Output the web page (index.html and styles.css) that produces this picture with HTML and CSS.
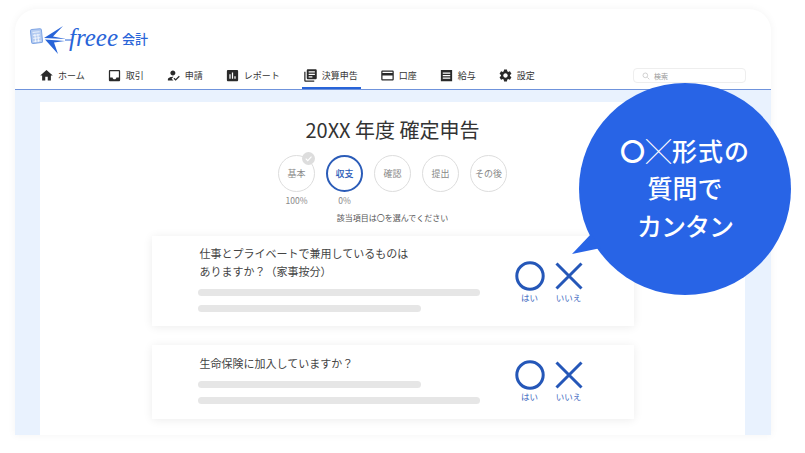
FILE: index.html
```html
<!DOCTYPE html>
<html lang="ja">
<head>
    <meta charset="UTF-8">
    <title>freee会計</title>
    <link rel="stylesheet" href="styles.css">
</head>
<body>
    <div class="window">
        <div class="logo">
            <svg class="logo-mark" viewBox="0 0 44 31" width="44" height="31">
                <g transform="rotate(-6 8 12)">
                    <rect x="2" y="5" width="11" height="14" rx="1.500" fill="#b4cbf1" stroke="#7fa5e4"/>
                    <path d="M4 8h7M4 11h7M4 14h7M4 17h7M6 10v8M9 10v8" stroke="#fff" stroke-width=".7"/>
                </g>
                <path d="M34 2L15 14l22 1-13-2.500z" fill="#2864d8"/>
                <path d="M29 30L16 15.500l20 1.500-11 1.500z" fill="#2864d8"/>
                <path d="M36 16h8" stroke="#2864d8" stroke-width="1"/>
            </svg>
            <span class="logo-name">freee</span>
            <span class="logo-sub">会計</span>
        </div>
        <div class="nav">
            <div class="nav-item">
                <svg class="icon" viewBox="0 0 24 24"><path d="M10 20v-6h4v6h5v-8h3L12 3 2 12h3v8z"/></svg>ホーム
            </div>
            <div class="nav-item">
                <svg class="icon" viewBox="0 0 24 24"><path d="M19 3H5c-1.1 0-2 .9-2 2v14c0 1.1.9 2 2 2h14c1.1 0 2-.9 2-2V5c0-1.100-.9-2-2-2zm0 12h-4c0 1.660-1.350 3-3 3s-3-1.340-3-3H5V5h14v10z"/></svg>取引
            </div>
            <div class="nav-item">
                <svg class="icon" viewBox="0 0 24 24"><path d="M9 17l3-2.940c-.39-.04-.68-.06-1-.06-2.670 0-8 1.340-8 4v2h9l-3-3zm2-5c2.210 0 4-1.790 4-4s-1.790-4-4-4-4 1.790-4 4 1.790 4 4 4M15.470 20.500L12 17l1.400-1.410 2.070 2.080 5.130-5.170 1.400 1.410z"/></svg>申請
            </div>
            <div class="nav-item">
                <svg class="icon" viewBox="0 0 24 24"><path d="M19 3H5c-1.100 0-2 .9-2 2v14c0 1.100.9 2 2 2h14c1.100 0 2-.9 2-2V5c0-1.100-.9-2-2-2zM9 17H7v-7h2v7zm4 0h-2V7h2v10zm4 0h-2v-4h2v4z"/></svg>レポート
            </div>
            <div class="nav-item active">
                <svg class="icon" viewBox="0 0 24 24"><path d="M4 6H2v14c0 1.100.9 2 2 2h14v-2H4V6zm16-4H8c-1.100 0-2 .9-2 2v12c0 1.100.9 2 2 2h12c1.100 0 2-.9 2-2V4c0-1.100-.9-2-2-2zm-1 9H9V9h10v2zm-4 4H9v-2h6v2zm4-8H9V5h10v2z"/></svg>決算申告
            </div>
            <div class="nav-item">
                <svg class="icon" viewBox="0 0 24 24"><path d="M20 4H4c-1.110 0-1.990.89-1.990 2L2 18c0 1.110.89 2 2 2h16c1.110 0 2-.89 2-2V6c0-1.110-.89-2-2-2zm0 14H4v-6h16v6zm0-10H4V6h16v2z"/></svg>口座
            </div>
            <div class="nav-item">
                <svg class="icon" viewBox="0 0 24 24"><path fill-rule="evenodd" d="M3 3h18v18H3zM6 7v2h12V7zM6 11v2h12v-2zM6 15v2h12v-2z"/></svg>給与
            </div>
            <div class="nav-item">
                <svg class="icon" viewBox="0 0 24 24"><path d="M19.140 12.940c.04-.3.06-.61.06-.94 0-.32-.02-.64-.07-.94l2.030-1.580c.18-.14.23-.41.12-.61l-1.920-3.320c-.12-.22-.37-.29-.59-.22l-2.390.96c-.5-.38-1.030-.7-1.620-.94l-.36-2.540c-.04-.24-.24-.41-.48-.41h-3.840c-.24 0-.43.17-.47.41l-.36 2.540c-.59.24-1.130.57-1.620.94l-2.390-.96c-.22-.08-.47 0-.59.22L2.740 8.870c-.12.21-.08.47.12.61l2.030 1.580c-.05.3-.09.63-.09.94s.02.64.07.94l-2.030 1.580c-.18.14-.23.41-.12.61l1.920 3.320c.12.22.37.29.59.22l2.390-.96c.5.38 1.030.7 1.620.94l.36 2.540c.05.24.24.41.48.41h3.840c.24 0 .44-.17.47-.41l.36-2.540c.59-.24 1.130-.56 1.620-.94l2.390.96c.22.08.47 0 .59-.22l1.920-3.320c.12-.22.07-.47-.12-.61l-2.010-1.580zM12 15.600c-1.980 0-3.600-1.620-3.600-3.600s1.620-3.600 3.600-3.600 3.600 1.620 3.600 3.600-1.620 3.600-3.600 3.600z"/></svg>設定
            </div>
            <div class="search">
                <svg class="search-icon" viewBox="0 0 12 12"><circle cx="5" cy="5" r="3.500"/><path d="M8 8l3 3"/></svg>検索
            </div>
        </div>
        <div class="content">
            <div class="panel">
                <h1 class="title">20XX 年度 確定申告</h1>
                <div class="steps">
                    <div class="step">
                        <div class="circle">基本
                            <svg class="done" viewBox="0 0 14 14"><circle cx="7" cy="7" r="7"/><path d="M4 7.200l2.200 2.200L10.200 5"/></svg>
                        </div>
                        <div class="percent">100%</div>
                    </div>
                    <div class="step">
                        <div class="circle current">収支</div>
                        <div class="percent">0%</div>
                    </div>
                    <div class="step"><div class="circle">確認</div></div>
                    <div class="step"><div class="circle">提出</div></div>
                    <div class="step"><div class="circle">その後</div></div>
                </div>
                <p class="hint">該当項目は〇を選んでください</p>

                <div class="card first">
                    <div class="question">
                        <p class="text">仕事とプライベートで兼用しているものは<br>ありますか？（家事按分）</p>
                        <div class="bar"></div>
                        <div class="bar short"></div>
                    </div>
                    <div class="answers">
                        <div class="answer">
                            <svg class="mark" viewBox="0 0 30 30"><circle cx="15" cy="15" r="13.200"/></svg>
                            <span>はい</span>
                        </div>
                        <div class="answer">
                            <svg class="mark" viewBox="0 0 30 30"><path d="M2.500 2.500l25 25M27.500 2.500l-25 25"/></svg>
                            <span>いいえ</span>
                        </div>
                    </div>
                </div>

                <div class="card second">
                    <div class="question">
                        <p class="text">生命保険に加入していますか？</p>
                        <div class="bar short"></div>
                        <div class="bar"></div>
                    </div>
                    <div class="answers">
                        <div class="answer">
                            <svg class="mark" viewBox="0 0 30 30"><circle cx="15" cy="15" r="13.200"/></svg>
                            <span>はい</span>
                        </div>
                        <div class="answer">
                            <svg class="mark" viewBox="0 0 30 30"><path d="M2.500 2.500l25 25M27.500 2.500l-25 25"/></svg>
                            <span>いいえ</span>
                        </div>
                    </div>
                </div>
            </div>
        </div>
    </div>

    <div class="bubble">
        <svg class="tail" viewBox="0 0 30 24" width="30" height="24"><path d="M0 20L19 0l10 14z"/></svg>
        <p class="bubble-text"><span class="wide"><b class="cross">〇╳</b>形式の</span><br>質問で<br><span class="tight">カンタン</span></p>
    </div>
</body>
</html>
```

FILE: styles.css
```css
* {
    margin: 0;
    padding: 0;
    box-sizing: border-box;
}
body {
    width: 805px;
    height: 453px;
    overflow: hidden;
    background: #fff;
    font-family: "Noto Sans CJK JP", "Noto Sans", sans-serif;
    color: #333;
    position: relative;
}
.window {
    width: 756px;
    height: 426px;
    margin: 9px 0 0 15px;
    display: flex;
    flex-direction: column;
    background: #fff;
    border-radius: 22px 22px 0 0;
    box-shadow: 0 0 8px rgba(0, 0, 0, .05);
}
.logo {
    height: 59px;
    padding: 15px 0 0 14px;
    display: flex;
    align-items: flex-start;
    flex-shrink: 0;
}
.logo-mark {
    flex-shrink: 0;
}
.logo-name {
    font-family: "Liberation Serif", serif;
    font-style: italic;
    font-size: 25px;
    line-height: 28px;
    color: #2864d8;
    margin-left: -4px;
}
.logo-sub {
    font-size: 13px;
    line-height: 30px;
    font-weight: 500;
    color: #2864d8;
    margin-left: 4px;
}
.nav {
    height: 22px;
    padding-left: 24px;
    display: flex;
    gap: 22px;
    border-bottom: 1px solid #6f93dc;
    flex-shrink: 0;
    font-size: 9px;
}
.nav-item {
    display: flex;
    align-items: flex-start;
    gap: 4px;
    line-height: 15px;
    height: 21px;
    white-space: nowrap;
}
.nav-item.active {
    border-bottom: 2px solid #2864d8;
    padding: 0 3px 0 1px;
    margin-right: -3px;
}
.icon {
    width: 15px;
    height: 15px;
    fill: #2a2a2a;
    flex-shrink: 0;
}
.search {
    width: 113px;
    height: 15px;
    margin-left: auto;
    margin-right: 25px;
    padding-left: 8px;
    border: 1px solid #eee;
    border-radius: 4px;
    display: flex;
    align-items: center;
    gap: 4px;
    font-size: 7px;
    color: #999;
}
.search-icon {
    width: 8px;
    height: 8px;
    fill: none;
    stroke: #bbb;
}
.content {
    flex: 1;
    min-height: 0;
    padding: 12px 26px 0 25px;
    background: #e9f2fe;
}
.panel {
    height: 100%;
    background: #fff;
    display: flex;
    flex-direction: column;
    align-items: center;
}
.title {
    margin-top: 14px;
    font-size: 20px;
    font-weight: 400;
    line-height: 28px;
    color: #333;
}
.steps {
    margin-top: 11px;
    display: flex;
    gap: 11px;
    height: 53px;
}
.step {
    width: 37px;
    display: flex;
    flex-direction: column;
    align-items: center;
}
.circle {
    width: 37px;
    height: 37px;
    border: 1.500px solid #ddd;
    border-radius: 50%;
    font-size: 9px;
    color: #888;
    display: flex;
    align-items: center;
    justify-content: center;
    white-space: nowrap;
    position: relative;
}
.circle.current {
    border: 2px solid #2b5cb8;
    color: #2b5cb8;
    font-weight: 500;
}
.done {
    position: absolute;
    top: -4px;
    right: -1px;
    width: 13px;
    height: 13px;
    fill: #ddd;
}
.done path {
    fill: none;
    stroke: #fff;
    stroke-width: 1.200;
}
.percent {
    margin-top: 2px;
    font-size: 8.500px;
    line-height: 13px;
    color: #888;
}
.hint {
    font-size: 8px;
    line-height: 12px;
    margin-top: 4px;
    color: #555;
}
.card {
    width: 482px;
    margin-top: 12px;
    padding-left: 46px;
    display: flex;
    background: #fff;
    box-shadow: 0 1px 9px rgba(0, 0, 0, .08);
}
.card.first {
    height: 90px;
}
.card.second {
    height: 74px;
    margin-top: 19px;
}
.question {
    width: 282px;
    flex-shrink: 0;
}
.text {
    padding-left: 2px;
    font-size: 11px;
    line-height: 17px;
    color: #444;
    margin-top: 9px;
    white-space: nowrap;
}
.card.first .text {
    line-height: 17.500px;
}
.bar {
    height: 7px;
    margin-top: 9px;
    border-radius: 4px;
    background: #e6e6e6;
}
.bar.short {
    width: 223px;
}
.answers {
    margin-left: 35px;
    display: flex;
    gap: 9px;
    padding-top: 25px;
}
.card.second .answers {
    padding-top: 15px;
}
.card.second .question .text {
    margin-top: 10px;
}
.answer {
    width: 30px;
    display: flex;
    flex-direction: column;
    align-items: center;
    font-size: 8.500px;
    line-height: 12px;
    color: #3d68c0;
    white-space: nowrap;
}
.mark {
    width: 30px;
    height: 30px;
    fill: none;
    stroke: #2557b8;
    stroke-width: 3;
}
.bubble {
    position: absolute;
    left: 579px;
    top: 83px;
    width: 212px;
    height: 212px;
    border-radius: 50%;
    background: #2864e6;
    display: flex;
    align-items: center;
    justify-content: center;
}
.tail {
    position: absolute;
    left: -7px;
    top: 151px;
    fill: #2864e6;
}
.bubble-text {
    position: relative;
    top: -1px;
    font-size: 25px;
    font-weight: 500;
    line-height: 37.500px;
    color: #fff;
    text-align: center;
    white-space: nowrap;
}
.wide {
    letter-spacing: 1px;
}
.tight {
    letter-spacing: -1px;
}
.cross {
    font-weight: 700;
}
```
